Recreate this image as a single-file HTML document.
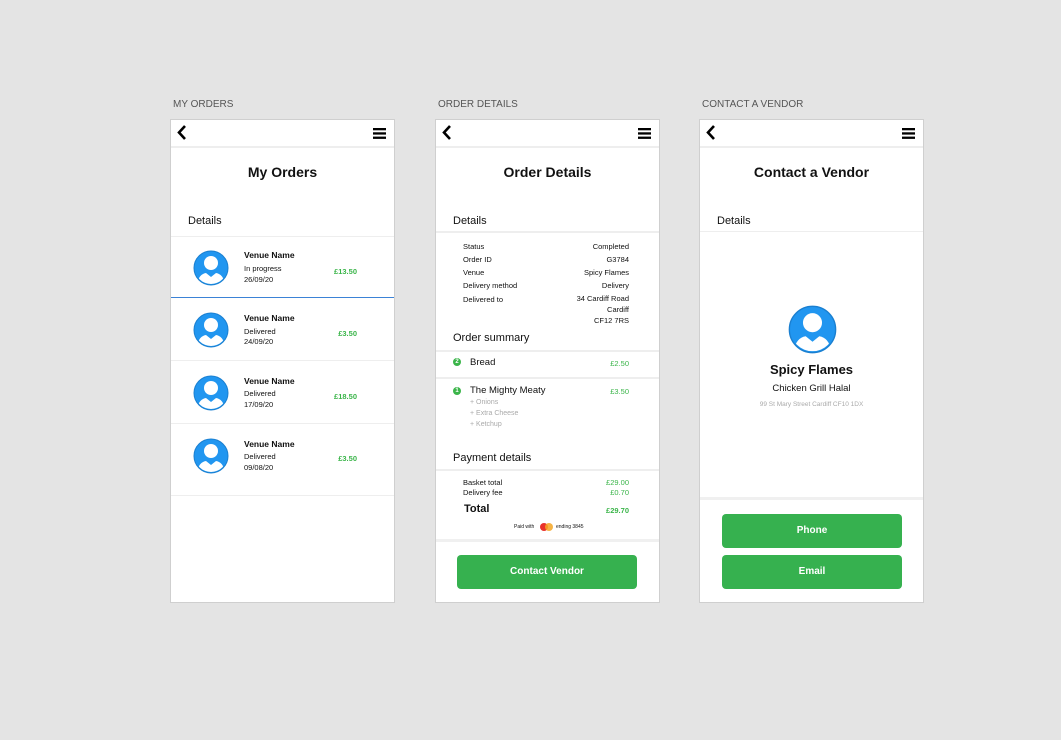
<!DOCTYPE html>
<html><head><meta charset="utf-8"><style>
*{margin:0;padding:0;box-sizing:border-box}
body{width:1061px;height:740px;background:#e4e4e4;font-family:"Liberation Sans",sans-serif;position:relative;overflow:hidden;color:#111}
.a{position:absolute;white-space:nowrap}
.lbl{font-size:10px;color:#555;top:99px}
.fr{position:absolute;top:119px;width:225px;height:484px;background:#fff;border:1px solid #cfcfcf}
.hd{position:absolute;left:0;top:0}
.t{font-weight:bold;font-size:14px;width:100%;text-align:center;top:44px}
.det{font-size:11px;left:17px;top:95px}
.ln{position:absolute;left:0;width:100%;height:1px;background:#eee}
.g{color:#3bb54a;font-weight:bold;font-size:7.5px}
.s{font-size:7.5px}
.btn{position:absolute;background:#36b14f;color:#fff;font-weight:bold;font-size:10px;text-align:center;border-radius:4px;height:34px;line-height:34px;width:180px}
</style></head><body>
<svg width="0" height="0" style="position:absolute"><defs>
<symbol id="av" viewBox="0 0 36 36"><circle cx="18" cy="18" r="17" fill="#2196f0" stroke="#1a7fd0" stroke-width="1"/><clipPath id="cc"><circle cx="18" cy="18" r="16"/></clipPath><g clip-path="url(#cc)" fill="#fff"><circle cx="18" cy="13" r="7"/><path d="M4 34 Q6 24 13 23 L18 27 L23 23 Q30 24 32 34 Z"/></g></symbol>
</defs></svg>

<div class="a lbl" style="left:173px">MY ORDERS</div>
<div class="a lbl" style="left:438px">ORDER DETAILS</div>
<div class="a lbl" style="left:702px">CONTACT A VENDOR</div>

<!-- Frame 1 -->
<div class="fr" style="left:170px">
<svg class="hd" width="223" height="27"><path d="M14 6 L8 12.5 L14 19" stroke="#000" stroke-width="2.6" fill="none"/><rect x="202" y="8" width="13" height="2.3" fill="#000"/><rect x="202" y="12.3" width="13" height="2.3" fill="#000"/><rect x="202" y="16.6" width="13" height="2.3" fill="#000"/></svg>
<div class="ln" style="top:26px;height:2px"></div>
<div class="a t">My Orders</div>
<div class="a det">Details</div>
<div class="ln" style="top:116px"></div>
<svg class="a" style="left:22px;top:130px" width="36" height="36"><use href="#av"/></svg>
<div class="a" style="left:73px;top:130px;font-size:8.5px;font-weight:bold">Venue Name</div>
<div class="a s" style="left:73px;top:144px">In progress</div>
<div class="a s" style="left:73px;top:155px">26/09/20</div>
<div class="a g" style="right:37px;top:147px">£13.50</div>
<div class="a" style="left:0;top:177px;width:100%;height:1px;background:#3b82d6"></div>
<svg class="a" style="left:22px;top:192px" width="36" height="36"><use href="#av"/></svg>
<div class="a" style="left:73px;top:193px;font-size:8.5px;font-weight:bold">Venue Name</div>
<div class="a s" style="left:73px;top:207px">Delivered</div>
<div class="a s" style="left:73px;top:217px">24/09/20</div>
<div class="a g" style="right:37px;top:209px">£3.50</div>
<div class="ln" style="top:240px"></div>
<svg class="a" style="left:22px;top:255px" width="36" height="36"><use href="#av"/></svg>
<div class="a" style="left:73px;top:256px;font-size:8.5px;font-weight:bold">Venue Name</div>
<div class="a s" style="left:73px;top:269px">Delivered</div>
<div class="a s" style="left:73px;top:280px">17/09/20</div>
<div class="a g" style="right:37px;top:272px">£18.50</div>
<div class="ln" style="top:303px"></div>
<svg class="a" style="left:22px;top:318px" width="36" height="36"><use href="#av"/></svg>
<div class="a" style="left:73px;top:319px;font-size:8.5px;font-weight:bold">Venue Name</div>
<div class="a s" style="left:73px;top:332px">Delivered</div>
<div class="a s" style="left:73px;top:343px">09/08/20</div>
<div class="a g" style="right:37px;top:334px">£3.50</div>
<div class="ln" style="top:375px"></div>
</div>

<!-- Frame 2 -->
<div class="fr" style="left:435px">
<svg class="hd" width="223" height="27"><path d="M14 6 L8 12.5 L14 19" stroke="#000" stroke-width="2.6" fill="none"/><rect x="202" y="8" width="13" height="2.3" fill="#000"/><rect x="202" y="12.3" width="13" height="2.3" fill="#000"/><rect x="202" y="16.6" width="13" height="2.3" fill="#000"/></svg>
<div class="ln" style="top:26px;height:2px"></div>
<div class="a t">Order Details</div>
<div class="a det">Details</div>
<div class="ln" style="top:111px;height:2px"></div>
<div class="a s" style="left:27px;top:122px">Status</div><div class="a s" style="right:30px;top:122px">Completed</div>
<div class="a s" style="left:27px;top:135px">Order ID</div><div class="a s" style="right:30px;top:135px">G3784</div>
<div class="a s" style="left:27px;top:148px">Venue</div><div class="a s" style="right:30px;top:148px">Spicy Flames</div>
<div class="a s" style="left:27px;top:161px">Delivery method</div><div class="a s" style="right:30px;top:161px">Delivery</div>
<div class="a s" style="left:27px;top:175px">Delivered to</div>
<div class="a s" style="right:30px;top:173px;text-align:right;line-height:11px;white-space:normal;width:80px">34 Cardiff Road<br>Cardiff<br>CF12 7RS</div>
<div class="a" style="left:17px;top:212px;font-size:11px">Order summary</div>
<div class="ln" style="top:230px;height:2px"></div>
<div class="a" style="left:17px;top:238px;width:8px;height:8px;border-radius:50%;background:#3bb54a;color:#fff;font-size:6px;text-align:center;line-height:8px;font-weight:bold">2</div>
<div class="a" style="left:34px;top:237px;font-size:9.5px">Bread</div>
<div class="a g" style="right:30px;top:239px;font-weight:normal">£2.50</div>
<div class="ln" style="top:257px;height:2px"></div>
<div class="a" style="left:17px;top:267px;width:8px;height:8px;border-radius:50%;background:#3bb54a;color:#fff;font-size:6px;text-align:center;line-height:8px;font-weight:bold">1</div>
<div class="a" style="left:34px;top:265px;font-size:9.5px">The Mighty Meaty</div>
<div class="a g" style="right:30px;top:267px;font-weight:normal">£3.50</div>
<div class="a s" style="left:34px;top:279px;color:#aaa;font-size:7px">+ Onions</div>
<div class="a s" style="left:34px;top:290px;color:#aaa;font-size:7px">+ Extra Cheese</div>
<div class="a s" style="left:34px;top:301px;color:#aaa;font-size:7px">+ Ketchup</div>
<div class="a" style="left:17px;top:332px;font-size:11px">Payment details</div>
<div class="ln" style="top:349px;height:2px"></div>
<div class="a s" style="left:27px;top:358px">Basket total</div><div class="a g" style="right:30px;top:358px;font-weight:normal">£29.00</div>
<div class="a s" style="left:27px;top:368px">Delivery fee</div><div class="a g" style="right:30px;top:368px;font-weight:normal">£0.70</div>
<div class="a" style="left:28px;top:383px;font-size:11px;font-weight:bold">Total</div><div class="a g" style="right:30px;top:386px">£29.70</div>
<div class="a" style="left:78px;top:404px;font-size:5px">Paid with</div>
<div class="a" style="left:104px;top:403px;width:8px;height:8px;border-radius:50%;background:#e8322b"></div>
<div class="a" style="left:109px;top:403px;width:8px;height:8px;border-radius:50%;background:#f5a623;opacity:.85"></div>
<div class="a" style="left:120px;top:404px;font-size:5px">ending 3845</div>
<div class="ln" style="top:419px;height:3px;background:#f0f0f0"></div>
<div class="btn" style="left:21px;top:435px">Contact Vendor</div>
</div>

<!-- Frame 3 -->
<div class="fr" style="left:699px">
<svg class="hd" width="223" height="27"><path d="M14 6 L8 12.5 L14 19" stroke="#000" stroke-width="2.6" fill="none"/><rect x="202" y="8" width="13" height="2.3" fill="#000"/><rect x="202" y="12.3" width="13" height="2.3" fill="#000"/><rect x="202" y="16.6" width="13" height="2.3" fill="#000"/></svg>
<div class="ln" style="top:26px;height:2px"></div>
<div class="a t">Contact a Vendor</div>
<div class="a det">Details</div>
<div class="ln" style="top:111px;height:1px"></div>
<svg class="a" style="left:88px;top:185px" width="49" height="49"><use href="#av"/></svg>
<div class="a" style="width:100%;text-align:center;top:242px;font-size:13px;font-weight:bold">Spicy Flames</div>
<div class="a" style="width:100%;text-align:center;top:263px;font-size:9.5px">Chicken Grill Halal</div>
<div class="a" style="width:100%;text-align:center;top:281px;font-size:6.5px;color:#aaa">99 St Mary Street Cardiff CF10 1DX</div>
<div class="ln" style="top:377px;height:3px;background:#f0f0f0"></div>
<div class="btn" style="left:22px;top:394px">Phone</div>
<div class="btn" style="left:22px;top:435px">Email</div>
</div>
</body></html>
